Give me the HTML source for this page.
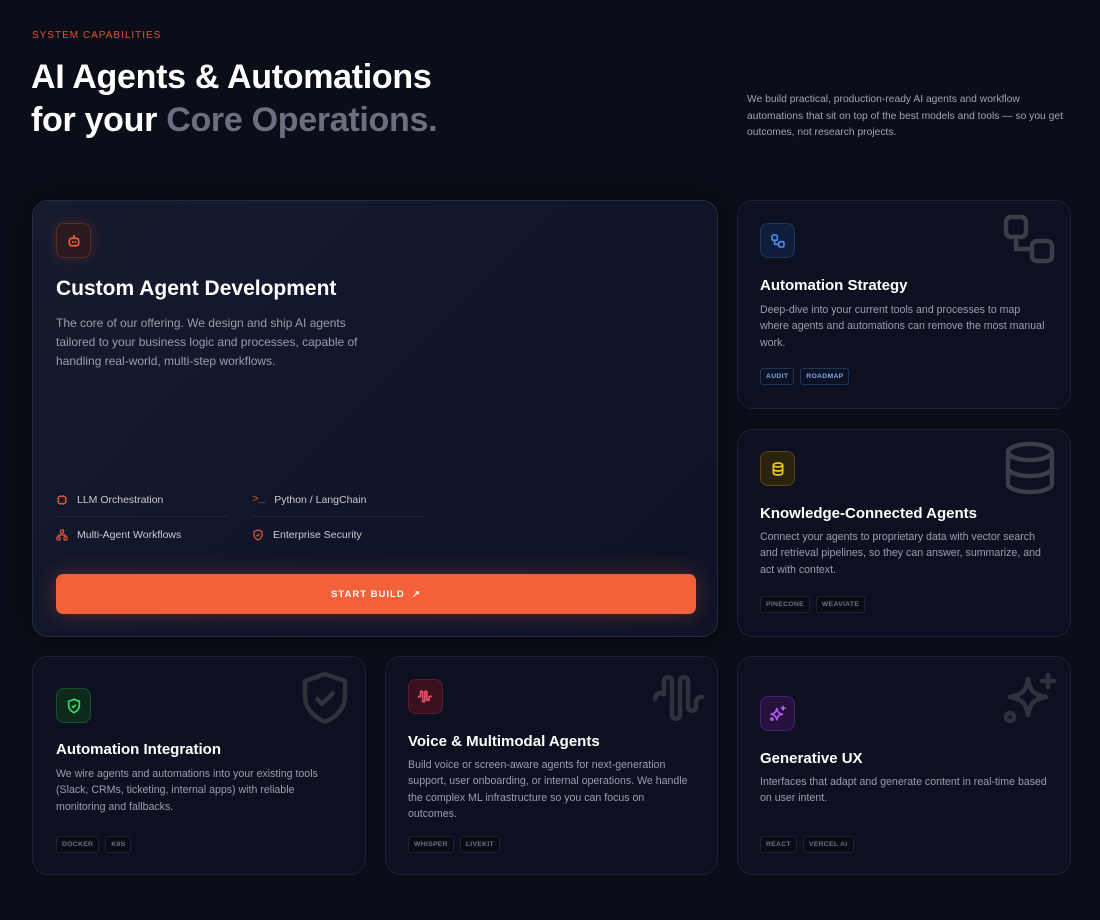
<!DOCTYPE html>
<html><head><meta charset="utf-8"><style>
*{margin:0;padding:0;box-sizing:border-box}
body{width:1100px;height:920px;background:#0b0d18;font-family:"Liberation Sans",sans-serif;position:relative;overflow:hidden;color:#fff}
.a{position:absolute}
.card{position:absolute;border:1px solid #1d2131;border-radius:16px;background:#0d1020}
.main{background:linear-gradient(135deg,#161b2e,#10142a 60%,#0f1326);border-color:#252a3c;box-shadow:0 0 30px rgba(0,0,0,.5)}
.ic{position:absolute;width:35px;height:35px;border-radius:8px;display:flex;align-items:center;justify-content:center}
h3{position:absolute;font-size:15px;font-weight:700;color:#fff;white-space:nowrap}
p.d{position:absolute;font-size:10.6px;line-height:16.3px;color:#9a9eab}
.tags{position:absolute;display:flex;gap:6px}
.tag{font-size:6.8px;font-weight:700;letter-spacing:.3px;color:#6c7080;border:1px solid #1f2230;background:#0a0c16;border-radius:3px;padding:3px 5px;line-height:9px}
.tag.b{color:#7ea4e0;border-color:#1e3358;background:#0b1224}
.big{position:absolute;opacity:1}
.feat{position:absolute;font-size:10.5px;color:#c8cad2;display:flex;align-items:center;gap:9px}
</style></head><body>
<div class="a" style="left:32px;top:30px;font-size:10px;letter-spacing:1px;color:#e0552f">SYSTEM CAPABILITIES</div>
<div class="a" style="left:31px;top:56px;font-size:34px;font-weight:700;line-height:43px;letter-spacing:-.3px">AI Agents &amp; Automations<br>for your <span style="color:#6b7080">Core Operations.</span></div>
<div class="a" style="left:747px;top:92px;font-size:10.3px;line-height:16.5px;color:#a0a3b0;width:326px">We build practical, production-ready AI agents and workflow automations that sit on top of the best models and tools — so you get outcomes, not research projects.</div>

<div class="card main" style="left:32px;top:200px;width:686px;height:437px">
 <div class="ic" style="left:23px;top:22px;background:#2a1a1e;border:1px solid #5a2a22;box-shadow:0 0 12px rgba(242,97,57,.2)"><svg width="16" height="16" viewBox="0 0 24 24" fill="none" stroke="#f26139" stroke-width="2.4" stroke-linecap="round"><path d="M12 4v3"/><rect x="5" y="8" width="14" height="11" rx="3"/><path d="M10 13v1M14 13v1"/></svg></div>
 <div class="a" style="left:23px;top:76px;font-size:21px;font-weight:700">Custom Agent Development</div>
 <div class="a" style="left:23px;top:113px;font-size:12px;line-height:19px;color:#9a9eab;width:310px">The core of our offering. We design and ship AI agents tailored to your business logic and processes, capable of handling real-world, multi-step workflows.</div>
 <div class="feat" style="left:23px;top:293px"><svg width="12" height="12" viewBox="0 0 24 24" fill="none" stroke="#e0552f" stroke-width="2.5"><rect x="5" y="5" width="14" height="14" rx="2"/><path d="M9 2v3M15 2v3M9 19v3M15 19v3M2 9h3M2 15h3M19 9h3M19 15h3"/></svg>LLM Orchestration</div>
 <div class="feat" style="left:219px;top:293px"><span style="color:#e0552f;font-family:'Liberation Mono';font-size:11px">&gt;_</span>Python / LangChain</div>
 <div class="a" style="left:23px;top:315px;width:172px;height:1px;background:#1f2335"></div>
 <div class="a" style="left:219px;top:315px;width:172px;height:1px;background:#1f2335"></div>
 <div class="feat" style="left:23px;top:328px"><svg width="12" height="12" viewBox="0 0 24 24" fill="none" stroke="#e0552f" stroke-width="2.5"><rect x="9" y="2" width="6" height="6" rx="1"/><rect x="2" y="16" width="6" height="6" rx="1"/><rect x="16" y="16" width="6" height="6" rx="1"/><path d="M12 8v4M5 16v-4h14v4"/></svg>Multi-Agent Workflows</div>
 <div class="feat" style="left:219px;top:328px"><svg width="12" height="12" viewBox="0 0 24 24" fill="none" stroke="#e0552f" stroke-width="2.5"><path d="M12 2l8 3v6c0 5-3.5 9-8 11-4.5-2-8-6-8-11V5z"/><path d="M9 12l2 2 4-4"/></svg>Enterprise Security</div>
 <div class="a" style="left:23px;top:373px;width:640px;height:40px;background:#f26139;border-radius:7px;box-shadow:0 0 22px rgba(242,97,57,.3);display:flex;align-items:center;justify-content:center;font-size:9.5px;font-weight:700;letter-spacing:1px">START BUILD&nbsp;&nbsp;↗</div>
</div>

<div class="card" style="left:737px;top:200px;width:334px;height:209px">
 <svg class="big" style="left:264px;top:12px" width="56" height="56" viewBox="0 0 56 56" fill="none" stroke="#3b3e49" stroke-width="4.5"><rect x="4" y="4" width="20" height="20" rx="5"/><rect x="30" y="28" width="20" height="20" rx="5"/><path d="M14 24v12h16"/></svg>
 <div class="ic" style="left:22px;top:22px;background:#0f1e3a;border:1px solid #1e3560"><svg width="16" height="16" viewBox="0 0 24 24" fill="none" stroke="#4a8ff0" stroke-width="2.4"><rect x="3" y="3" width="8" height="8" rx="2"/><rect x="13" y="13" width="8" height="8" rx="2"/><path d="M7 11v6h6"/></svg></div>
 <h3 style="left:22px;top:76px">Automation Strategy</h3>
 <p class="d" style="left:22px;top:101px;width:288px">Deep-dive into your current tools and processes to map where agents and automations can remove the most manual work.</p>
 <div class="tags" style="left:22px;top:167px"><span class="tag b">AUDIT</span><span class="tag b">ROADMAP</span></div>
</div>

<div class="card" style="left:737px;top:429px;width:334px;height:208px">
 <svg class="big" style="left:264px;top:10px" width="56" height="56" viewBox="0 0 56 56" fill="none" stroke="#3b3e49" stroke-width="4.5"><ellipse cx="28" cy="12" rx="22" ry="8"/><path d="M6 12v32c0 4.5 10 8 22 8s22-3.5 22-8V12M6 28c0 4.5 10 8 22 8s22-3.5 22-8"/></svg>
 <div class="ic" style="left:22px;top:21px;background:#2a2310;border:1px solid #5a4810"><svg width="16" height="16" viewBox="0 0 24 24" fill="none" stroke="#f5c518" stroke-width="2.5"><ellipse cx="12" cy="6" rx="7" ry="3"/><path d="M5 6v12c0 1.7 3 3 7 3s7-1.3 7-3V6M5 12c0 1.7 3 3 7 3s7-1.3 7-3"/></svg></div>
 <h3 style="left:22px;top:75px">Knowledge-Connected Agents</h3>
 <p class="d" style="left:22px;top:99px;width:288px">Connect your agents to proprietary data with vector search and retrieval pipelines, so they can answer, summarize, and act with context.</p>
 <div class="tags" style="left:22px;top:166px"><span class="tag">PINECONE</span><span class="tag">WEAVIATE</span></div>
</div>

<div class="card" style="left:32px;top:656px;width:334px;height:219px">
 <svg class="big" style="left:268px;top:14px" width="48" height="54" viewBox="0 0 48 54" fill="none" stroke="#2f323d" stroke-width="4.5" stroke-linejoin="round"><path d="M24 3l20 7v15c0 13-9 21-20 26C13 46 4 38 4 25V10z"/><path d="M15 27l6 6 12-12"/></svg>
 <div class="ic" style="left:23px;top:31px;background:#0e2a1a;border:1px solid #1a5030"><svg width="16" height="16" viewBox="0 0 24 24" fill="none" stroke="#2fe070" stroke-width="2.5"><path d="M12 2l8 3v6c0 5-3.5 9-8 11-4.5-2-8-6-8-11V5z"/><path d="M9 12l2 2 4-4"/></svg></div>
 <h3 style="left:23px;top:84px">Automation Integration</h3>
 <p class="d" style="left:23px;top:109px;width:270px">We wire agents and automations into your existing tools (Slack, CRMs, ticketing, internal apps) with reliable monitoring and fallbacks.</p>
 <div class="tags" style="left:23px;top:179px"><span class="tag">DOCKER</span><span class="tag">K8S</span></div>
</div>

<div class="card" style="left:385px;top:656px;width:333px;height:219px">
 <svg class="big" style="left:266px;top:14px" width="56" height="54" viewBox="0 0 56 54" fill="none" stroke="#2f323d" stroke-width="4.5" stroke-linecap="round"><path d="M3 28c0-4 3-6 5-6s4 3 4 0V10c0-5 8-5 8 0v34c0 5 8 5 8 0V10c0-5 8-5 8 0v26c0 5 8 5 8 0v-6c0-3 4-4 6-4"/></svg>
 <div class="ic" style="left:22px;top:22px;background:#3a1020;border:1px solid #601a2c"><svg width="17" height="17" viewBox="0 0 24 24" fill="none" stroke="#f0506a" stroke-width="2.3" stroke-linecap="round"><path d="M2 13c1-2 3-2 3 0V6c0-2 3-2 3 0v12c0 2 3 2 3 0V6c0-2 3-2 3 0v10c0 2 3 2 3 0v-3c0-1 2-2 3-1"/></svg></div>
 <h3 style="left:22px;top:76px">Voice &amp; Multimodal Agents</h3>
 <p class="d" style="left:22px;top:100px;width:280px">Build voice or screen-aware agents for next-generation support, user onboarding, or internal operations. We handle the complex ML infrastructure so you can focus on outcomes.</p>
 <div class="tags" style="left:22px;top:179px"><span class="tag">WHISPER</span><span class="tag">LIVEKIT</span></div>
</div>

<div class="card" style="left:737px;top:656px;width:334px;height:219px">
 <svg class="big" style="left:264px;top:14px" width="56" height="56" viewBox="0 0 56 56" fill="none" stroke="#2f323d" stroke-width="4.5" stroke-linejoin="round" stroke-linecap="round"><path d="M26 8c2 12 6 16 18 18-12 2-16 6-18 18-2-12-6-16-18-18 12-2 16-6 18-18z"/><path d="M46 4v12M40 10h12"/><circle cx="8" cy="46" r="4"/></svg>
 <div class="ic" style="left:22px;top:39px;background:#25123e;border:1px solid #45206e"><svg width="17" height="17" viewBox="0 0 24 24" fill="none" stroke="#b45cf5" stroke-width="2.3" stroke-linejoin="round" stroke-linecap="round"><path d="M11 5c1 5 3 7 8 8-5 1-7 3-8 8-1-5-3-7-8-8 5-1 7-3 8-8z"/><path d="M20 2v5M17.5 4.5h5"/><circle cx="4" cy="20" r="1.5"/></svg></div>
 <h3 style="left:22px;top:93px">Generative UX</h3>
 <p class="d" style="left:22px;top:117px;width:292px">Interfaces that adapt and generate content in real-time based on user intent.</p>
 <div class="tags" style="left:22px;top:179px"><span class="tag">REACT</span><span class="tag">VERCEL AI</span></div>
</div>
</body></html>
